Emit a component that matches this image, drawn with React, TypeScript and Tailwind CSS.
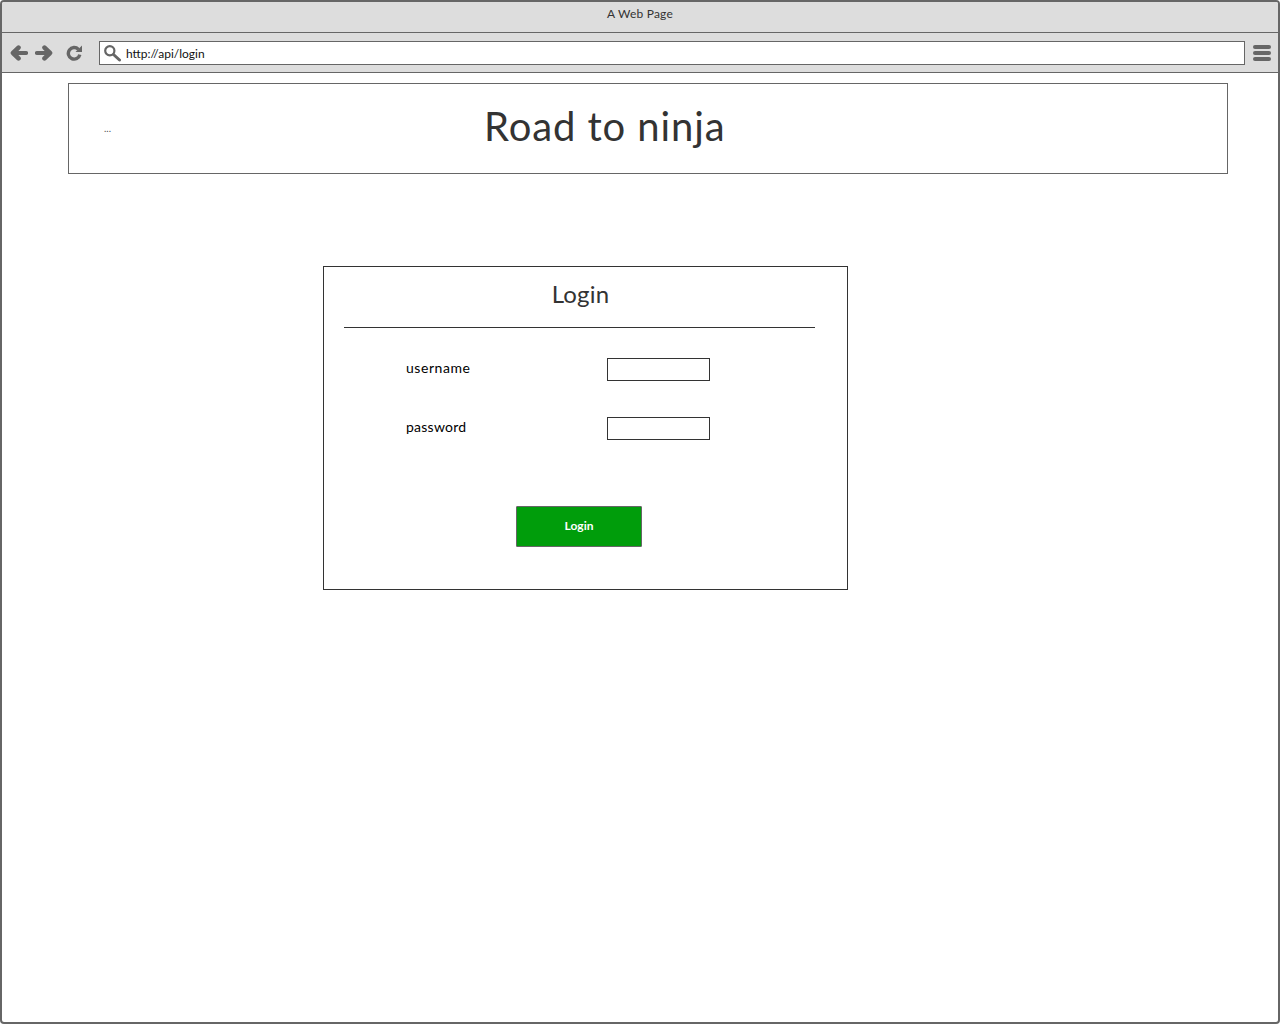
import React from 'react'

const font = "font-['Lato','Noto_Sans',sans-serif]"

const BackIcon = ({ flip = false }: { flip?: boolean }) => (
  <svg width="18" height="16" viewBox="0 0 18 16" className={flip ? 'scale-x-[-1]' : ''}>
    <path d="M8.5 2.6 L3 8 L8.5 13.4" fill="none" stroke="#666" strokeWidth="4.6" strokeLinecap="round" strokeLinejoin="round" />
    <path d="M4 8 H16" fill="none" stroke="#666" strokeWidth="4.2" strokeLinecap="round" />
  </svg>
)

const ReloadIcon = () => (
  <svg width="17" height="16" viewBox="0 0 17 16">
    <path d="M12.4 4.4 A5.8 5.8 0 1 0 13.8 9.6" fill="none" stroke="#666" strokeWidth="3.4" />
    <path d="M9.5 7 H16 V0.5 Z" fill="#666" />
  </svg>
)

const SearchIcon = () => (
  <svg width="17" height="17" viewBox="0 0 17 17">
    <circle cx="5.8" cy="5.8" r="4.6" fill="none" stroke="#666" strokeWidth="2.2" />
    <path d="M9.5 9.5 L15.5 15" stroke="#666" strokeWidth="3" strokeLinecap="round" />
  </svg>
)

const FormRow = ({ label, tracking }: { label: string; tracking: string }) => (
  <div className="flex h-[23px] items-start pl-[82px]">
    <span className={`w-[201px] text-[14px] leading-[20px] text-black ${tracking}`}>{label}</span>
    <div className="h-[23px] w-[103px] border border-[#333] bg-white" />
  </div>
)

export default function App() {
  return (
    <div className={`${font} h-[1024px] w-[1280px] overflow-hidden rounded-[4px] border-2 border-[#666] bg-white`}>
      <div className="flex h-[31px] items-center justify-center border-b border-[#666] bg-[#ddd] pb-[6px] text-[12px] tracking-[0.2px] text-[#333]">
        A Web Page
      </div>
      <div className="flex h-[40px] items-start border-b border-[#666] bg-[#ddd] pl-[8px] pr-[7px] pt-[8px]">
        <div className="flex h-[24px] w-[89px] items-center">
          <BackIcon />
          <div className="ml-[7px]"><BackIcon flip /></div>
          <div className="ml-[13px]"><ReloadIcon /></div>
        </div>
        <div className="flex h-[24px] flex-1 items-center border border-[#666] bg-white pl-[4px] text-[12px] text-[#111]">
          <SearchIcon />
          <span className="ml-[5px] pt-[2px]">http://api/login</span>
        </div>
        <div className="ml-[8px] flex h-[24px] w-[18px] flex-col justify-center gap-[2px]">
          <div className="h-[4px] rounded-full bg-[#666]" />
          <div className="h-[4px] rounded-full bg-[#666]" />
          <div className="h-[4px] rounded-full bg-[#666]" />
        </div>
      </div>

      <div className="ml-[66px] mt-[10px] flex h-[91px] w-[1160px] items-center border border-[#666] pl-[35px]">
        <span className="w-[380px] text-[10px] text-[#555]">...</span>
        <h1 className="pb-[6px] text-[40px] font-normal leading-none tracking-[0.9px] text-[#333]">Road to ninja</h1>
      </div>

      <div className="ml-[321px] mt-[92px] h-[324px] w-[525px] border border-[#333]">
        <div className="pr-[10px] pt-[12px] text-center text-[24px] leading-[30px] tracking-[0.2px] text-[#333]">Login</div>
        <div className="ml-[20px] mt-[18px] h-px w-[471px] bg-[#333]" />
        <div className="mt-[30px] flex flex-col gap-[36px]">
          <FormRow label="username" tracking="tracking-[0.55px]" />
          <FormRow label="password" tracking="tracking-[0.25px]" />
        </div>
        <button className="ml-[192px] mt-[66px] flex h-[41px] w-[126px] items-center justify-center rounded-[1px] border border-[#666] bg-[#009d0b] pb-[2px] text-[12px] font-bold text-white">
          Login
        </button>
      </div>
    </div>
  )
}
